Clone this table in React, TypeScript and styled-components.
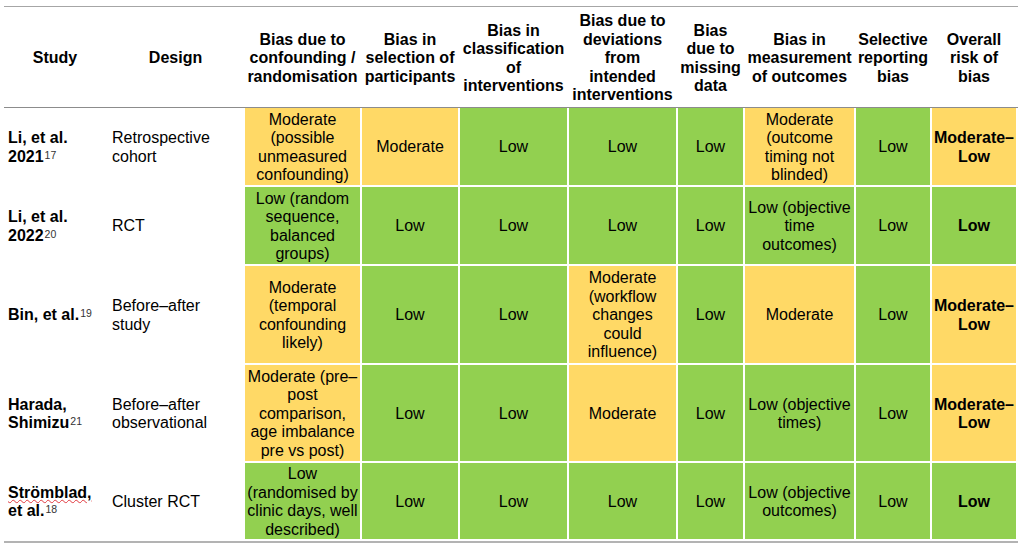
import React from "react";
import styled, { createGlobalStyle } from "styled-components";

const GlobalStyle = createGlobalStyle`
  body {
    margin: 0;
    background: #fff;
    font-family: "Liberation Sans", Arial, sans-serif;
    color: #000;
  }
`;

const COLUMNS = "102px 135px 115px 96px 107px 107px 65px 109px 74px 84px";

const COLORS = {
  moderate: "#FFD966",
  low: "#92D050",
};

type Risk = "moderate" | "low";

const Page = styled.div`
  padding: 6px 0 0 4px;
  width: 1016px;
`;

const Table = styled.div`
  width: 1014px;
  border-top: 1px solid #a6a6a6;
  border-bottom: 2px solid #b3b3b3;
  padding-bottom: 2px;
`;

const HeaderRow = styled.div`
  display: grid;
  grid-template-columns: ${COLUMNS};
  column-gap: 2px;
  height: 100px;
  border-bottom: 1px solid #8c8c8c;
`;

const HeaderCell = styled.div`
  display: flex;
  align-items: center;
  justify-content: center;
  padding-top: 3px;
  text-align: center;
  font-size: 16px;
  font-weight: 700;
  line-height: 18.5px;
  white-space: nowrap;
`;

const Body = styled.div`
  display: grid;
  grid-template-columns: ${COLUMNS};
  column-gap: 2px;
  row-gap: 2px;
`;

const TextCell = styled.div<{ $bold?: boolean }>`
  display: flex;
  align-items: center;
  padding: 2px 0 0 4px;
  font-size: 16px;
  line-height: 18.5px;
  font-weight: ${(p) => (p.$bold ? 700 : 400)};
`;

const RiskCell = styled.div<{ $risk: Risk; $bold?: boolean }>`
  display: flex;
  align-items: center;
  justify-content: center;
  padding-top: 2px;
  text-align: center;
  white-space: nowrap;
  background: ${(p) => COLORS[p.$risk]};
  font-size: 16px;
  line-height: 18.5px;
  font-weight: ${(p) => (p.$bold ? 700 : 400)};
`;

const Sup = styled.sup`
  font-size: 10.5px;
  font-weight: 400;
  color: #333;
  vertical-align: top;
  position: relative;
  top: -2px;
  margin-left: 1px;
`;

const Misspelt = styled.span`
  text-decoration-line: underline;
  text-decoration-style: wavy;
  text-decoration-color: #e0383e;
  text-decoration-thickness: 1px;
  text-underline-offset: 1px;
`;

const headers: string[][] = [
  ["Study"],
  ["Design"],
  ["Bias due to", "confounding /", "randomisation"],
  ["Bias in", "selection of", "participants"],
  ["Bias in", "classification", "of", "interventions"],
  ["Bias due to", "deviations", "from", "intended", "interventions"],
  ["Bias", "due to", "missing", "data"],
  ["Bias in", "measurement", "of outcomes"],
  ["Selective", "reporting", "bias"],
  ["Overall", "risk of", "bias"],
];

type Cell = { risk: Risk; lines: string[] };

type Row = {
  study: React.ReactNode;
  design: string[];
  height: number;
  cells: Cell[];
  overall: Cell;
};

const M = (...lines: string[]): Cell => ({ risk: "moderate", lines });
const L = (...lines: string[]): Cell => ({ risk: "low", lines });

const rows: Row[] = [
  {
    study: (
      <>
        Li, et al.
        <br />
        2021<Sup>17</Sup>
      </>
    ),
    design: ["Retrospective", "cohort"],
    height: 77,
    cells: [
      M("Moderate", "(possible", "unmeasured", "confounding)"),
      M("Moderate"),
      L("Low"),
      L("Low"),
      L("Low"),
      M("Moderate", "(outcome", "timing not", "blinded)"),
      L("Low"),
    ],
    overall: M("Moderate–", "Low"),
  },
  {
    study: (
      <>
        Li, et al.
        <br />
        2022<Sup>20</Sup>
      </>
    ),
    design: ["RCT"],
    height: 77,
    cells: [
      L("Low (random", "sequence,", "balanced", "groups)"),
      L("Low"),
      L("Low"),
      L("Low"),
      L("Low"),
      L("Low (objective", "time", "outcomes)"),
      L("Low"),
    ],
    overall: L("Low"),
  },
  {
    study: (
      <>
        Bin, et al.<Sup>19</Sup>
      </>
    ),
    design: ["Before–after", "study"],
    height: 97,
    cells: [
      M("Moderate", "(temporal", "confounding", "likely)"),
      L("Low"),
      L("Low"),
      M("Moderate", "(workflow", "changes", "could", "influence)"),
      L("Low"),
      M("Moderate"),
      L("Low"),
    ],
    overall: M("Moderate–", "Low"),
  },
  {
    study: (
      <>
        Harada,
        <br />
        Shimizu<Sup>21</Sup>
      </>
    ),
    design: ["Before–after", "observational"],
    height: 96,
    cells: [
      M("Moderate (pre–", "post", "comparison,", "age imbalance", "pre vs post)"),
      L("Low"),
      L("Low"),
      M("Moderate"),
      L("Low"),
      L("Low (objective", "times)"),
      L("Low"),
    ],
    overall: M("Moderate–", "Low"),
  },
  {
    study: (
      <>
        <Misspelt>Strömblad,</Misspelt>
        <br />
        et al.<Sup>18</Sup>
      </>
    ),
    design: ["Cluster RCT"],
    height: 76,
    cells: [
      L("Low", "(randomised by", "clinic days, well", "described)"),
      L("Low"),
      L("Low"),
      L("Low"),
      L("Low"),
      L("Low (objective", "outcomes)"),
      L("Low"),
    ],
    overall: L("Low"),
  },
];

function Lines({ lines }: { lines: string[] }) {
  return (
    <span>
      {lines.map((line, i) => (
        <React.Fragment key={i}>
          {i > 0 && <br />}
          {line}
        </React.Fragment>
      ))}
    </span>
  );
}

export default function App() {
  return (
    <Page>
      <GlobalStyle />
      <Table>
        <HeaderRow>
          {headers.map((h, i) => (
            <HeaderCell key={i}>
              <Lines lines={h} />
            </HeaderCell>
          ))}
        </HeaderRow>
        <Body style={{ gridTemplateRows: rows.map((r) => `${r.height}px`).join(" ") }}>
          {rows.map((row, r) => (
            <React.Fragment key={r}>
              <TextCell $bold>
                <span>{row.study}</span>
              </TextCell>
              <TextCell>
                <Lines lines={row.design} />
              </TextCell>
              {row.cells.map((c, i) => (
                <RiskCell key={i} $risk={c.risk}>
                  <Lines lines={c.lines} />
                </RiskCell>
              ))}
              <RiskCell $risk={row.overall.risk} $bold>
                <Lines lines={row.overall.lines} />
              </RiskCell>
            </React.Fragment>
          ))}
        </Body>
      </Table>
    </Page>
  );
}
